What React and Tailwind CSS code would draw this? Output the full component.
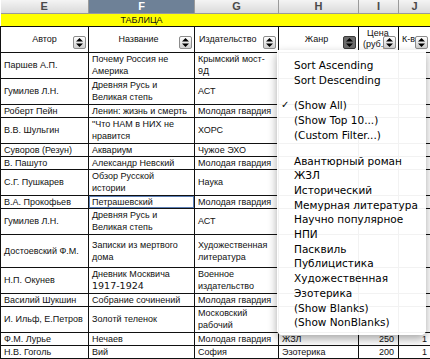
import React from 'react';

const ROWS = [
  { hc: 'h-[26px]', e: 'Паршев А.П.', f: ['Почему Россия не', 'Америка'], g: ['Крымский мост-', '9Д'] },
  { hc: 'h-[26px]', e: 'Гумилев Л.Н.', f: ['Древняя Русь и', 'Великая степь'], g: ['АСТ'] },
  { hc: 'h-[13px]', e: 'Роберт Пейн', f: ['Ленин: жизнь и смерть'], g: ['Молодая гвардия'] },
  { hc: 'h-[26px]', e: 'В.В. Шульгин', f: ['"Что НАМ в НИХ не', 'нравится'], g: ['ХОРС'] },
  { hc: 'h-[13px]', e: 'Суворов (Резун)', f: ['Аквариум'], g: ['Чужое ЭХО'] },
  { hc: 'h-[13px]', e: 'В. Пашуто', f: ['Александр Невский'], g: ['Молодая гвардия'] },
  { hc: 'h-[26px]', e: 'С.Г. Пушкарев', f: ['Обзор Русской', 'истории'], g: ['Наука'] },
  { hc: 'h-[13px]', e: 'В.А. Прокофьев', f: ['Петрашевский'], g: ['Молодая гвардия'], sel: true },
  { hc: 'h-[26px]', e: 'Гумилев Л.Н.', f: ['Древняя Русь и', 'Великая степь'], g: ['АСТ'] },
  { hc: 'h-[33px]', e: 'Достоевский Ф.М.', f: ['Записки из мертвого', 'дома'], g: ['Художественная', 'литература'] },
  { hc: 'h-[26px]', e: 'Н.П. Окунев', f: ['Дневник Москвича', '1917-1924'], g: ['Военное', 'издательство'], odd: true },
  { hc: 'h-[13px]', e: 'Василий Шукшин', f: ['Собрание сочинений'], g: ['Молодая гвардия'] },
  { hc: 'h-[26px]', e: 'И. Ильф, Е.Петров', f: ['Золотй теленок'], g: ['Московский', 'рабочий'] },
  { hc: 'h-[13px]', e: 'Ф.М. Лурье', f: ['Нечаев'], g: ['Молодая гвардия'], h: 'ЖЗЛ', i: '250', j: '1' },
  { hc: 'h-[13px]', e: 'Н.В. Гоголь', f: ['Вий'], g: ['София'], h: 'Эзотерика', i: '200', j: '1' },
  { hc: 'h-[13px]', e: '', f: [''], g: [''] },
];

const LETTERS = ['E', 'F', 'G', 'H', 'I', 'J'];

const MENU = [
  ['Sort Ascending', 'Sort Descending'],
  ['(Show All)', '(Show Top 10...)', '(Custom Filter...)'],
  ['Авантюрный роман', 'ЖЗЛ', 'Исторический', 'Мемурная литература', 'Научно популярное', 'НПИ',
    'Пасквиль', 'Публицистика', 'Художественная', 'Эзотерика', '(Show Blanks)', '(Show NonBlanks)'],
];

function SortButton({ active }) {
  return (
    <span className={`absolute right-[2px] bottom-[3px] flex h-[13px] w-[13px] items-center justify-center rounded-[2px] border ${active ? 'border-[#3a3a3a] bg-[#6b6b6b]' : 'border-[#8c8c8c] bg-linear-to-b from-white to-[#cfcfcf]'}`}>
      <svg width="7" height="9" viewBox="0 0 7 9">
        <path d="M3.5 0L7 3.6H0z M3.5 9L0 5.4H7z" fill="#000" />
      </svg>
    </span>
  );
}

function Lines({ lines, odd }) {
  return lines.map((l, k) => (
    <div key={k} className={odd && k === 1 ? "font-['DejaVu_Sans',sans-serif] text-[9.5px]" : ''}>{l}</div>
  ));
}

export default function App() {
  return (
    <div className="relative h-[359px] w-[430px] overflow-hidden bg-white font-['Liberation_Sans',Arial,sans-serif] text-[9px] leading-[12px] text-[#111]">
      <table className="w-[430px] table-fixed border-collapse">
        <colgroup>
          <col className="w-[88px]" />
          <col className="w-[106px]" />
          <col className="w-[84px]" />
          <col className="w-[80px]" />
          <col className="w-[40px]" />
          <col className="w-[32px]" />
        </colgroup>
        <thead>
          <tr className="h-[13px]">
            {LETTERS.map(l => (
              <th key={l}
                className={`border-r border-b border-[#9a9a9a] p-0 text-center text-[11px] leading-[12px] font-bold ${l === 'F' ? 'bg-[#6e8197] text-white' : 'bg-linear-to-b from-[#f4f4f4] to-[#dadada] text-[#4a4a4a]'}`}>
                {l}
              </th>
            ))}
          </tr>
        </thead>
        <tbody>
          {/* yellow title row */}
          <tr className="h-[12px] bg-[#ffff00]">
            <td className="border-y border-[#111] p-0" />
            <td className="border-y border-[#111] p-0 text-center">ТАБЛИЦА</td>
            <td className="border-y border-[#111] p-0" colSpan={4} />
          </tr>

          {/* field header row */}
          <tr className="h-[26px]">
            <td className="relative border border-[#111] p-0 text-center">Автор<SortButton /></td>
            <td className="relative border border-[#111] p-0 pr-[6px] text-center">Название<SortButton /></td>
            <td className="relative overflow-hidden whitespace-nowrap border border-[#111] p-0 pl-[4px]">Издательство<SortButton /></td>
            <td className="relative border border-[#111] p-0 pr-[4px] text-center">Жанр<SortButton active /></td>
            <td className="relative overflow-hidden border border-[#111] p-0 pl-[4px] leading-[11px]">
              <div className="pl-[4px]">Цена</div>
              <div className="whitespace-nowrap">(руб.)</div>
              <SortButton />
            </td>
            <td className="relative overflow-hidden whitespace-nowrap border border-[#111] p-0 pl-[3px]">К-во<SortButton /></td>
          </tr>

          {ROWS.map((r, idx) => (
            <tr key={idx} className={r.hc}>
              <td className="border border-[#111] px-[3px] py-0 whitespace-nowrap">{r.e}</td>
              <td className={`border border-[#111] px-[3px] py-0 whitespace-nowrap ${r.sel ? 'shadow-[inset_0_0_0_1px_#5d80b6]' : ''}`}>
                <Lines lines={r.f} odd={r.odd} />
              </td>
              <td className="border border-[#111] px-[3px] py-0 whitespace-nowrap"><Lines lines={r.g} /></td>
              <td className="border border-[#111] px-[3px] py-0 whitespace-nowrap">{r.h}</td>
              <td className="border border-[#111] px-[4px] py-0 text-right">{r.i}</td>
              <td className="border border-[#111] px-[3px] py-0 text-right">{r.j}</td>
            </tr>
          ))}
        </tbody>
      </table>

      {/* autofilter dropdown */}
      <div className="absolute left-[277px] top-[50px] w-[149px] rounded-b-[5px] bg-white/95 pt-[8px] pb-[5px] font-['DejaVu_Sans',sans-serif] text-[10.5px] leading-[14.7px] text-black shadow-[0_4px_10px_rgba(0,0,0,0.35)]">
        {MENU.map((group, gi) => (
          <div key={gi} className={gi > 0 ? 'mt-[11px]' : ''}>
            {group.map(item => (
              <div key={item} className="relative whitespace-nowrap pl-[17px]">
                {item === '(Show All)' && (
                  <span className="absolute left-[4px] top-0 text-[10px]">✓</span>
                )}
                {item}
              </div>
            ))}
          </div>
        ))}
      </div>
    </div>
  );
}
